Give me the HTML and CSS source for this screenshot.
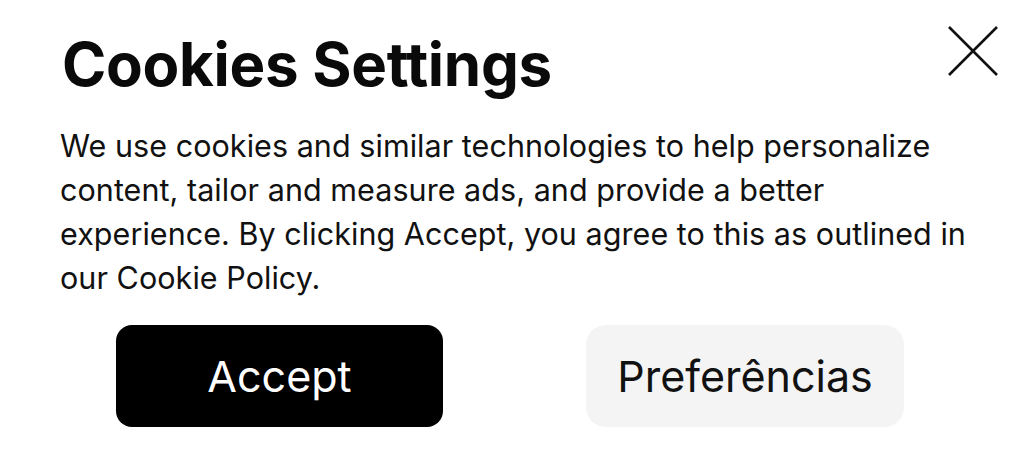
FILE: index.html
```html
<!DOCTYPE html>
<html lang="en">
<head>
  <meta charset="UTF-8">
  <meta name="viewport" content="width=device-width, initial-scale=1.0">
  <title>Cookies Settings</title>
  <link rel="stylesheet" href="styles.css">
</head>
<body>
  <div class="cookie-panel">
    <div class="panel-header">
      <h1 class="panel-title">Cookies Settings</h1>
      <button class="close-btn" aria-label="Close">
        <svg width="50" height="50" viewBox="0 0 50 50">
          <path d="M1 1 L49 49 M49 1 L1 49" stroke="#111" stroke-width="2.6" fill="none"/>
        </svg>
      </button>
    </div>
    <p class="panel-text">We use cookies and similar technologies to help personalize content, tailor and measure ads, and provide a better experience. By clicking Accept, you agree to this as outlined in our Cookie Policy.</p>
    <div class="actions">
      <button class="btn btn-accept">Accept</button>
      <button class="btn btn-prefs">Preferências</button>
    </div>
  </div>
</body>
</html>
```

FILE: styles.css
```css
body {
  margin: 0;
  background: #fff;
  color: #111;
  font-family: 'Inter', 'Liberation Sans', sans-serif;
  overflow: hidden;
}

.cookie-panel {
  padding: 26px 0 0 60px;
  width: 920px;
}

.panel-header {
  display: flex;
  justify-content: space-between;
  align-items: flex-start;
}

.panel-title {
  margin: 0 0 0 2px;
  font-size: 60px;
  font-weight: 700;
  line-height: 76px;
  letter-spacing: -0.3px;
  color: #0a0a0a;
}

.close-btn {
  background: none;
  border: none;
  padding: 0;
  margin: 0 -18px 0 0;
  cursor: pointer;
  display: flex;
}

.panel-text {
  margin: 22px 0 0;
  font-size: 30.5px;
  line-height: 44px;
  letter-spacing: 0.05px;
  color: #111;
}

.actions {
  display: flex;
  gap: 143px;
  margin: 25px 0 0 56px;
}

.btn {
  height: 102px;
  border: none;
  font-family: inherit;
  font-size: 43px;
  cursor: pointer;
}

.btn-accept {
  width: 327px;
  background: #000;
  color: #fff;
  border-radius: 16px;
}

.btn-prefs {
  width: 318px;
  background: #f4f4f4;
  color: #111;
  border-radius: 20px;
}
```
